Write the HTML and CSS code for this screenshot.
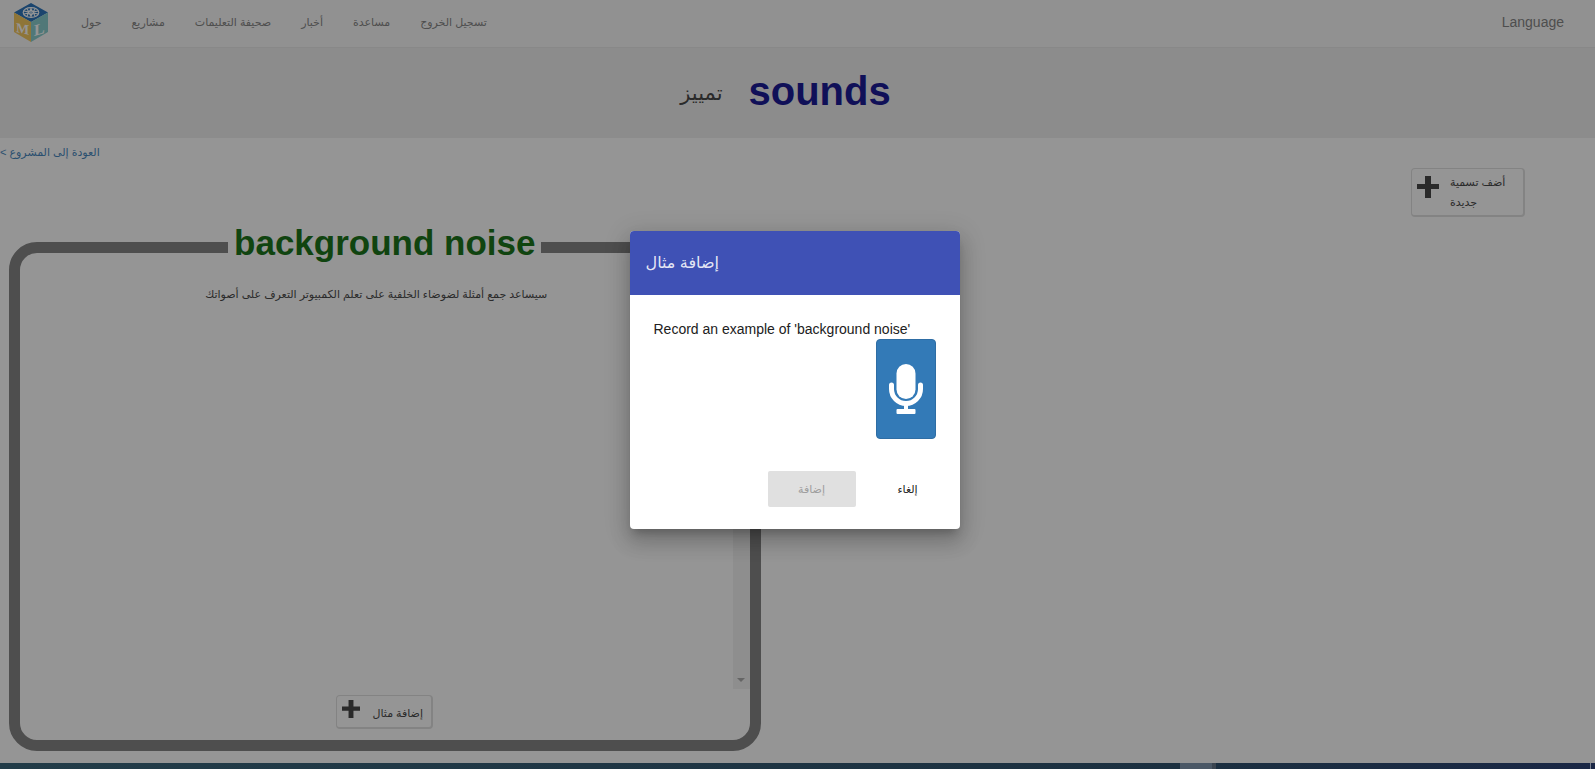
FILE: index.html
```html
<!DOCTYPE html>
<html lang="ar">
<head>
<meta charset="utf-8">
<meta name="viewport" content="width=device-width, initial-scale=1">
<title>sounds</title>
<link rel="stylesheet" href="styles.css">
</head>
<body>
<div class="page">
  <nav class="navbar">
    <a class="brand" href="#" aria-label="ML">
      <svg viewBox="0 0 34 39" width="34" height="39" aria-hidden="true">
        <path fill="#1667b5" d="M17 0 34 9.5 17 19 0 9.5z"/>
        <path fill="#f2c14e" d="M0 9.5 17 19v20L0 29z"/>
        <path fill="#7cc8c8" d="M34 9.5 17 19v20l17-10z"/>
        <g fill="none" stroke="#fff" stroke-width="1.2">
          <ellipse cx="17" cy="9.500" rx="7.800" ry="4.800"/>
          <path d="M17 5v9M10 8l5 1 2-3 2 3 5-1M10 11l5-1 2 3 2-3 5 1M13 6l2 3-2 4M21 6l-2 3 2 4"/>
        </g>
        <text class="brand-m" x="2" y="29" transform="skewY(12)" transform-origin="2 29">M</text>
        <text class="brand-l" x="20" y="33" transform="skewY(-16)" transform-origin="20 33">L</text>
      </svg>
    </a>
    <ul class="nav-list">
      <li><a href="#">حول</a></li>
      <li><a href="#">مشاريع</a></li>
      <li><a href="#">صحيفة التعليمات</a></li>
      <li><a href="#">أخبار</a></li>
      <li><a href="#">مساعدة</a></li>
      <li><a href="#">تسجيل الخروج</a></li>
    </ul>
    <a class="language" href="#">Language</a>
  </nav>
  <header class="banner">
    <span class="banner-verb">تمييز</span>
    <h1 class="banner-name">sounds</h1>
  </header>
  <main>
    <a class="back" href="#">&lt; العودة إلى المشروع</a>
    <div class="toolbar">
      <button class="btn btn-label" type="button">
        <svg class="plus" viewBox="0 0 22 22" width="22" height="22" aria-hidden="true"><path d="M8 0h6v8h8v5h-8v9H8v-9H0V8h8z"/></svg>
        <span class="label-text" dir="rtl">أضف تسمية جديدة</span>
      </button>
    </div>
    <fieldset class="bucket">
      <legend>background noise</legend>
      <div class="bucket-body">
        <p class="hint" dir="rtl">سيساعد جمع أمثلة لضوضاء الخلفية على تعلم الكمبيوتر التعرف على أصواتك</p>
        <div class="track"><span class="arrow"></span></div>
      </div>
      <div class="bucket-actions">
        <button class="btn btn-example" type="button">
          <svg class="plus" viewBox="0 0 22 22" width="18" height="18" aria-hidden="true"><path d="M8 0h6v8h8v5h-8v9H8v-9H0V8h8z"/></svg>
          <span>إضافة مثال</span>
        </button>
      </div>
    </fieldset>
  </main>
  <div class="backdrop">
    <div class="dialog" role="dialog" aria-modal="true" aria-labelledby="dialog-title">
      <h2 class="dialog-title" id="dialog-title">إضافة مثال</h2>
      <div class="dialog-body">
        <p class="prompt">Record an example of 'background noise'</p>
        <button class="mic" type="button" aria-label="Record">
          <svg viewBox="0 0 34 50" width="34" height="50" aria-hidden="true">
            <rect x="7.500" y="0" width="19" height="35" rx="9.500" fill="#fff"/>
            <path d="M2.500 21v4a14.500 14.500 0 0 0 29 0v-4" fill="none" stroke="#fff" stroke-width="5" stroke-linecap="round"/>
            <path d="M15 40h4v5h6.500q1 0 1 1v3q0 1-1 1h-17q-1 0-1-1v-3q0-1 1-1H15z" fill="#fff"/>
          </svg>
        </button>
      </div>
      <div class="dialog-actions">
        <button class="act act-add" type="button" disabled>إضافة</button>
        <button class="act act-cancel" type="button">إلغاء</button>
      </div>
    </div>
  </div>
</div>
<footer class="taskbar"><span class="task"></span><span class="edge"></span></footer>
</body>
</html>
```
FILE: styles.css
```css
* { box-sizing: border-box; }

body {
  margin: 0;
  min-height: 100vh;
  display: flex;
  flex-direction: column;
  font: 14px/20px "Liberation Sans", "DejaVu Sans", sans-serif;
  color: #333;
  background: #fff;
}

button { font: inherit; color: inherit; }
a { text-decoration: none; }

.page {
  position: relative;
  flex: 1;
  display: flex;
  flex-direction: column;
}

.navbar {
  display: flex;
  align-items: center;
  height: 48px;
  padding: 0 31px 3px 14px;
  background: #f8f8f8;
  border-bottom: 1px solid #e7e7e7;
}
.brand { display: flex; margin-right: 18px; }
.brand-m { font: bold 14px "Liberation Serif", serif; fill: #fff; }
.brand-l { font: bold 16px "Liberation Serif", serif; fill: #fff; }
.nav-list {
  display: flex;
  margin: 0;
  padding: 0;
  list-style: none;
  font-size: 11px;
}
.nav-list a { padding: 0 15px; color: #777; }
.language { margin-left: auto; color: #777; }

.banner {
  display: flex;
  justify-content: center;
  align-items: flex-start;
  gap: 26px;
  height: 90px;
  padding: 20px 24px 0 0;
  background: #eee;
}
.banner-verb { font-size: 21px; line-height: 50px; }
.banner-name {
  margin: 0;
  font-size: 40px;
  line-height: 46px;
  color: #00008b;
}

main { flex: 1; display: flex; flex-direction: column; }
.back { align-self: flex-start; margin-top: 4px; font-size: 11px; color: #337ab7; }

.toolbar { display: flex; justify-content: flex-end; padding: 6px 70px 0 0; }
.btn {
  display: flex;
  background: #fff;
  border: 1px solid #ddd;
  border-width: 1px 2px 2px 1px;
  border-radius: 4px;
  font-size: 11px;
}
.plus { fill: #333; }
.btn-label {
  gap: 11px;
  width: 114px;
  height: 49px;
  padding: 3px 12px 3px 5px;
}
.btn-label .plus { margin-top: 4px; flex: none; }
.label-text { text-align: left; }

.bucket {
  flex: 1;
  display: flex;
  flex-direction: column;
  width: calc(50% - 46px);
  min-width: 0;
  margin: 6px 0 12px 9px;
  padding: 0;
  border: 11px solid #777;
  border-radius: 28px;
}
.bucket legend {
  margin: 0 auto;
  padding: 0 6px 8px;
  font-size: 35px;
  font-weight: bold;
  line-height: 40px;
  color: #006400;
}
.bucket-body { display: flex; height: 418px; }
.hint { flex: 1; margin: 13px 0 0; text-align: center; font-size: 11px; }
.track {
  display: flex;
  justify-content: center;
  align-items: flex-end;
  width: 17px;
  padding-bottom: 7px;
  background: #f1f1f1;
}
.arrow { border: 4px solid transparent; border-top-color: #a3a3a3; border-bottom: 0; }
.bucket-actions { display: flex; justify-content: center; padding-top: 6px; }
.btn-example { gap: 12px; height: 34px; padding: 4px 8px 4px 5px; }
.btn-example span { padding-top: 3px; }

.backdrop {
  position: absolute;
  inset: 0;
  display: flex;
  justify-content: center;
  align-items: center;
  padding: 0 6px 4px 0;
  background: rgba(33, 33, 33, .48);
}
.dialog {
  width: 330px;
  background: #fff;
  border-radius: 4px;
  overflow: hidden;
  box-shadow: 0 7px 8px -4px rgba(0, 0, 0, .2), 0 13px 19px 2px rgba(0, 0, 0, .14), 0 5px 24px 4px rgba(0, 0, 0, .12);
}
.dialog-title {
  margin: 0;
  padding: 0 16px;
  font-size: 16px;
  font-weight: normal;
  line-height: 64px;
  color: rgba(255, 255, 255, .87);
  background: #3f51b5;
}
.dialog-body {
  display: flex;
  flex-direction: column;
  padding: 24px 24px 0;
  color: #212121;
}
.prompt { margin: 0; }
.mic {
  align-self: flex-end;
  display: flex;
  justify-content: center;
  align-items: center;
  width: 60px;
  height: 100px;
  padding: 0;
  background: #337ab7;
  border: 1px solid #2e6da4;
  border-radius: 4px;
}
.dialog-actions { display: flex; justify-content: flex-end; gap: 8px; padding: 32px 8px 22px; }
.act {
  width: 88px;
  height: 36px;
  padding: 0;
  border: 0;
  border-radius: 2px;
  font-size: 11px;
  color: #212121;
  background: transparent;
}
.act-add { color: #9e9e9e; background: #e0e0e0; }

.taskbar {
  display: flex;
  height: 6px;
  padding-left: 74%;
  background: linear-gradient(90deg, #223c48, #1c3040 74%, #1a2745);
}
.task { width: 36px; background: #4b5866; border-right: 4px solid #3b4550; }
.edge { width: 1px; margin: 0 4px 0 auto; background: #7b8290; }
```
